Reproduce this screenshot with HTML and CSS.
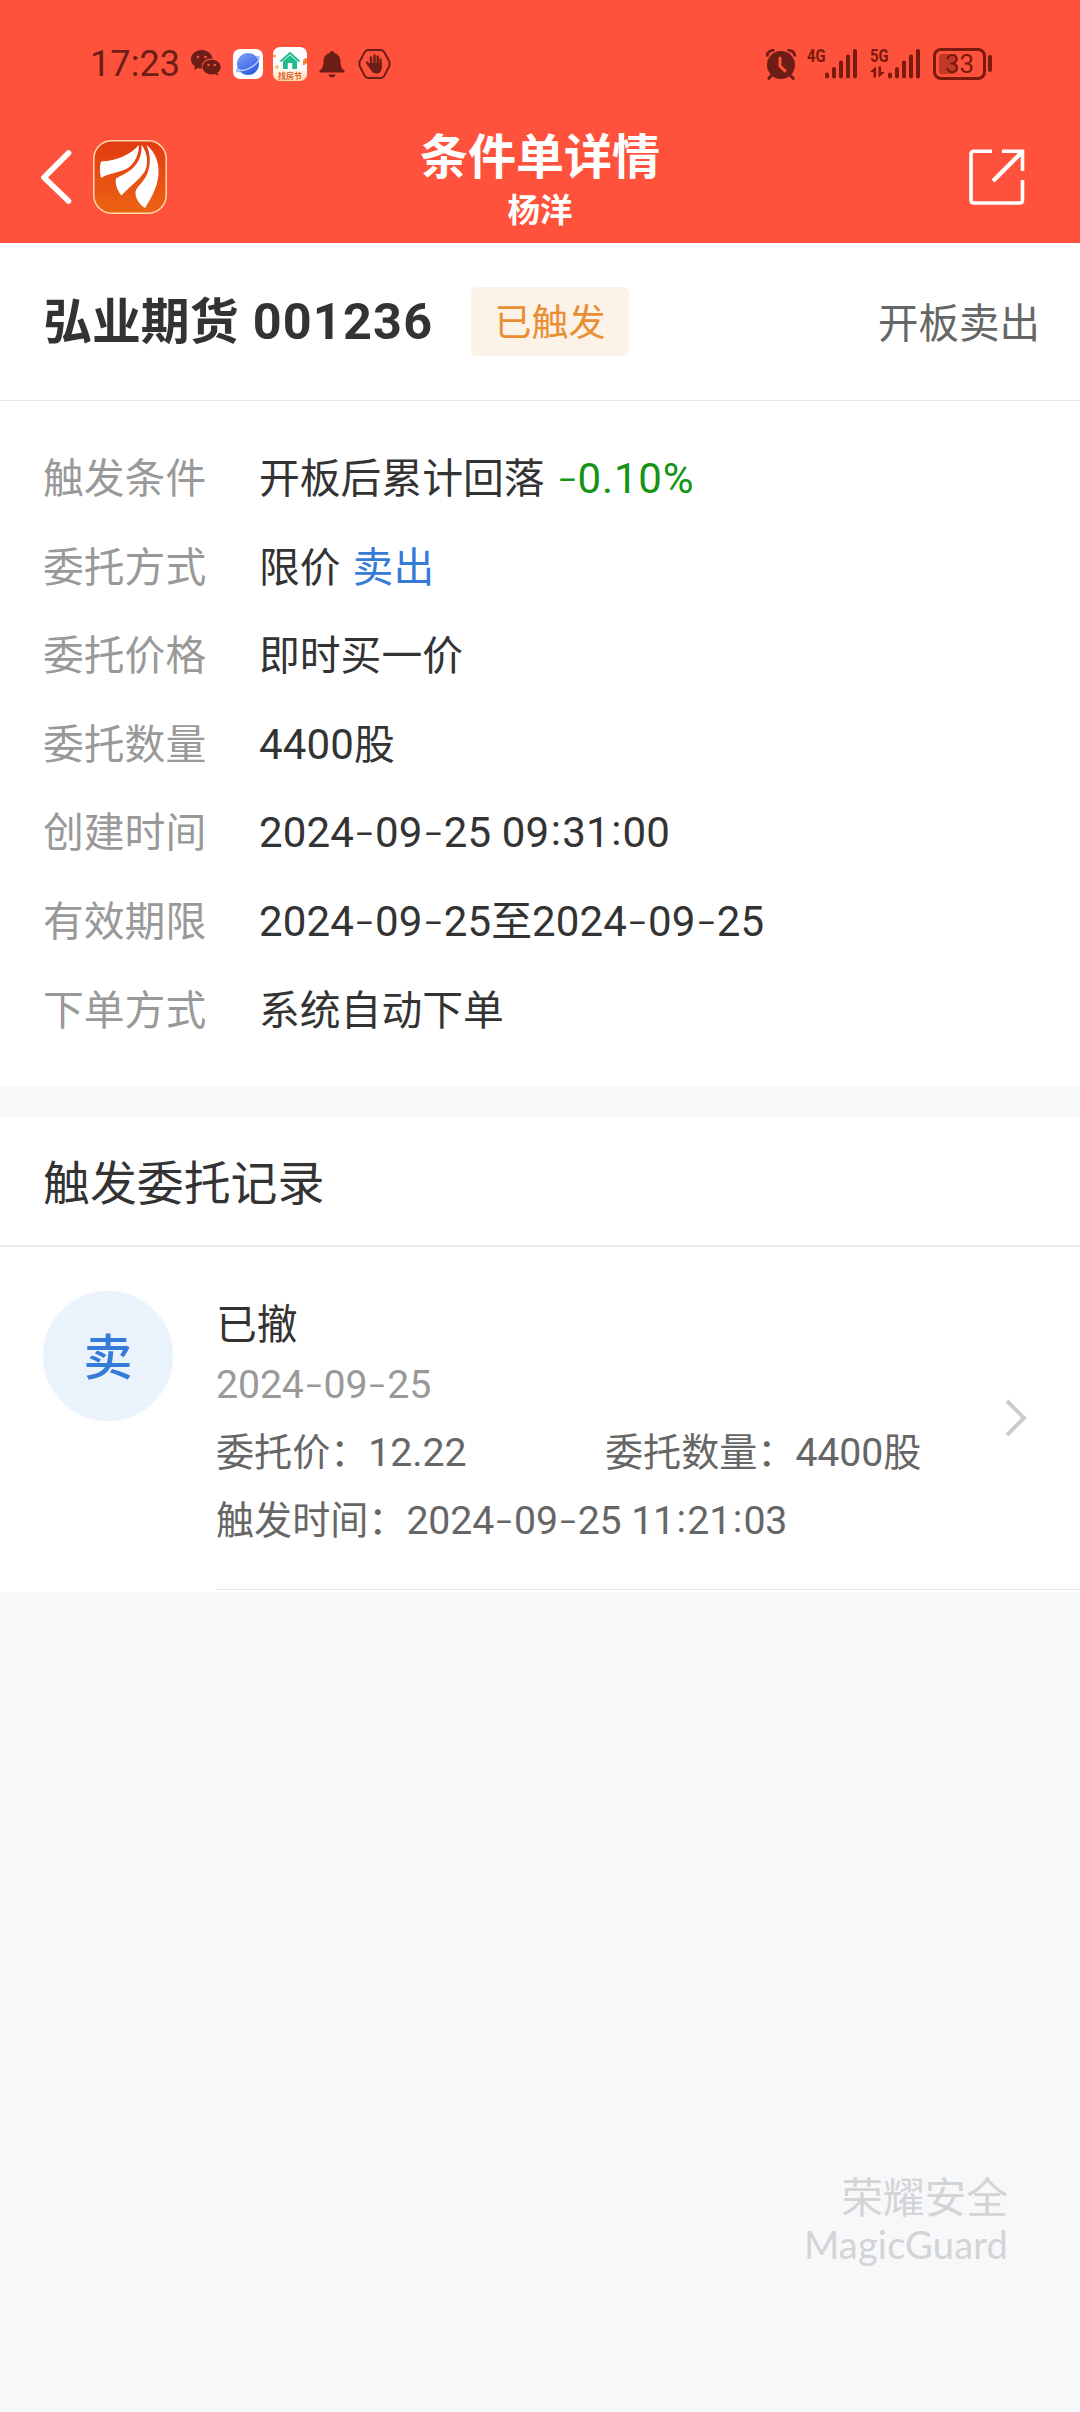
FILE: index.html
```html
<!DOCTYPE html>
<html lang="zh-CN">
<head>
<meta charset="utf-8">
<title>条件单详情</title>
<link rel="stylesheet" href="styles.css">
</head>
<body>
<header class="top">
  <div class="status">
    <span class="clock">17:23</span>
    <svg class="i-chat" width="32" height="30" viewBox="0 0 32 30"><path fill="#6b1d16" d="M12 1C5.500 1 1 5.200 1 10.200c0 3 1.500 5.600 4 7.300l-1 3.500 4-2c1.200.4 2.500.6 4 .6a9 9 0 0 1-.3-2c0-4.700 4.600-8 10-8h.9C21.600 4.500 17.300 1 12 1z"/><path fill="#6b1d16" d="M21.500 10.800c-5 0-9 3.200-9 7.300s4 7.300 9 7.300c1.200 0 2.200-.2 3.200-.5l3.600 1.900-.9-3.100c2-1.400 3.300-3.300 3.300-5.600 0-4.100-4.200-7.300-9.200-7.300z"/><g fill="#ff523c"><circle cx="8" cy="8" r="1.300"/><circle cx="15.500" cy="8" r="1.300"/><circle cx="18.500" cy="16" r="1.200"/><circle cx="24.800" cy="16" r="1.200"/></g></svg>
    <svg class="i-globe" width="30" height="30" viewBox="0 0 30 30"><defs><linearGradient id="gl" x1="0" y1="0" x2=".6" y2="1"><stop offset="0" stop-color="#83a4fb"/><stop offset="1" stop-color="#2e5ee0"/></linearGradient></defs><rect width="30" height="30" rx="7" fill="#fff"/><ellipse cx="15" cy="15" rx="14" ry="4" transform="rotate(-32 15 15)" fill="#a9c3fb"/><circle cx="15" cy="15" r="11" fill="url(#gl)"/><path d="M5 20.500C11 24 23 17 26.500 10" fill="none" stroke="#b7cbff" stroke-width="1.500"/></svg>
    <span class="i-house"><svg width="34" height="24" viewBox="0 0 34 24"><path d="M7.500 14.500L17 6l9.500 8.500" fill="none" stroke="#22bb8b" stroke-width="1.800"/><path d="M10 14.200l7-6 7 6V22h-4.800v-6h-4.400v6H10z" fill="#22bb8b"/><path d="M30 15q0-4 4-4v5q-3 3-4 2z" fill="#f08a2c"/><circle cx="1.500" cy="9" r="1.500" fill="#f5a050"/><circle cx="4" cy="20" r="2" fill="#f8c080"/></svg><b>找房节</b></span>
    <svg class="i-bell" width="26" height="28" viewBox="0 0 26 28"><path fill="#6b1d16" d="M13 1c1.300 0 2.200.8 2.300 1.900 4 1.100 6.200 4.300 6.200 8.400 0 5.700 1.500 7.400 3.700 9.200.8.700.4 1.900-.7 1.900h-23c-1.100 0-1.500-1.200-.7-1.900 2.200-1.800 3.700-3.500 3.700-9.200 0-4.100 2.200-7.300 6.200-8.400C10.800 1.800 11.700 1 13 1zM9.500 24.400h7c-.4 1.800-1.700 3-3.500 3s-3.100-1.200-3.500-3z"/></svg>
    <svg class="i-hand" width="33" height="32" viewBox="0 0 33 32"><path d="M9.500 2h14l2.500 1.600 5.500 10.200v4L26 28.400 23.500 30h-14L7 28.400 1.500 17.800v-4L7 3.600z" fill="none" stroke="#6b1d16" stroke-width="2"/><path d="M9 14.500l4.500 6M13 9.500v9M16.500 7.500v10M19.700 8.500v9M22.500 11.500v7" stroke="#6b1d16" stroke-width="2.400" stroke-linecap="round"/><path d="M11.800 15h11.900v4.500c0 4-2 6-5.500 6-3 0-4.600-1.800-6.400-5.200z" fill="#6b1d16"/></svg>
    <span class="grow"></span>
    <svg class="i-alarm" width="32" height="32" viewBox="0 0 32 32"><circle cx="16" cy="17" r="14" fill="#6b1d16"/><path d="M2 8.500a6 6 0 0 1 7.500-6M30 8.500a6 6 0 0 0-7.500-6" fill="none" stroke="#6b1d16" stroke-width="2.800"/><path d="M6.500 27.500L3.800 30.300M25.500 27.500l2.700 2.800" stroke="#6b1d16" stroke-width="3" stroke-linecap="round"/><path d="M15 10v8l5 4.800" fill="none" stroke="#ff523c" stroke-width="3" stroke-linecap="round"/></svg>
    <span class="net"><b>4G</b><svg width="34" height="31" viewBox="0 0 34 31"><path d="M3 26.500v2M10 21v7.500M17 14.500v14M24 8.500v20M31 3v25.500" stroke="#7a190e" stroke-width="4" stroke-linecap="round"/></svg></span>
    <span class="net five"><b>5G</b><svg class="arrows" width="16" height="12" viewBox="0 0 16 12"><path d="M6 .5V11.500H3.500V6H0zM8.500.5V11.500L15 6h-4V.5z" fill="#7a190e"/></svg><svg width="34" height="31" viewBox="0 0 34 31"><path d="M3 26.500v2M10 21v7.500M17 14.500v14M24 8.500v20M31 3v25.500" stroke="#7a190e" stroke-width="4" stroke-linecap="round"/></svg></span>
    <span class="battery"><span class="level"></span><b>33</b></span><span class="nub"></span>
  </div>
  <div class="nav">
    <div class="side">
      <svg class="back" width="34" height="58" viewBox="0 0 34 58"><path d="M29.500 5L5 29.500 29.500 53" fill="none" stroke="#fff" stroke-width="5.600" stroke-linecap="round" stroke-linejoin="round"/></svg>
      <svg class="logo" width="74" height="74" viewBox="0 0 74 74"><defs><linearGradient id="lg" x1="0" y1="0" x2="0" y2="1"><stop offset="0" stop-color="#e23a12"/><stop offset="1" stop-color="#ec6413"/></linearGradient></defs><rect x=".8" y=".8" width="72.400" height="72.400" rx="18" fill="url(#lg)" stroke="#ffd9a8" stroke-width="1.500"/><g fill="#fff"><path d="M8 21.500C24 20.500 37 15 46 5 46 14 42 23 35 28 26 33 16 33 8 38 6.500 32 6.500 26 8 21.500z"/><path d="M48.500 4.500C56 15 55.500 27 50 34c-6 8-14 13-21.500 21.500C24 50 22 44 23 38.500 31 34 39 31 44 23c3.500-5 5-12 4.500-18.500z"/><path d="M53.500 5C62 12 65.500 21 65.500 31 66 44 59 57 52 68 46 64 42 58 42.500 51.500c2-6 9-10 12-18.500 3.500-9 3-19-1-28z"/></g></svg>
    </div>
    <div class="titles"><h1>条件单详情</h1><p>杨洋</p></div>
    <div class="side end">
      <svg width="56" height="56" viewBox="0 0 56 56"><g fill="none" stroke="#fff" stroke-width="3.600"><path d="M23 2.300H5q-3 0-3 3V51q0 3 3 3h46q2.500 0 2.500-3V31"/><path d="M33 2.300h20.500V22" stroke-linejoin="miter"/><path d="M53 3L24 32" stroke-width="4.200"/></g></svg>
    </div>
  </div>
</header>
<main>
  <section class="card">
    <div class="stock">
      <h2>弘业期货 <span class="num">001236</span></h2>
      <span class="badge">已触发</span>
      <span class="kind">开板卖出</span>
    </div>
    <dl class="info">
      <dt>触发条件</dt><dd>开板后累计回落<span class="num green gap"><i>-</i>0.10%</span></dd>
      <dt>委托方式</dt><dd>限价<span class="blue gap2">卖出</span></dd>
      <dt>委托价格</dt><dd>即时买一价</dd>
      <dt>委托数量</dt><dd><span class="num">4400</span>股</dd>
      <dt>创建时间</dt><dd><span class="num">2024<i>-</i>09<i>-</i>25 09<u>:</u>31<u>:</u>00</span></dd>
      <dt>有效期限</dt><dd><span class="num">2024<i>-</i>09<i>-</i>25</span>至<span class="num">2024<i>-</i>09<i>-</i>25</span></dd>
      <dt>下单方式</dt><dd>系统自动下单</dd>
    </dl>
  </section>
  <section class="card records">
    <h3>触发委托记录</h3>
    <div class="record">
      <span class="avatar">卖</span>
      <div class="body">
        <p class="state">已撤</p>
        <p class="date"><span class="num">2024<i>-</i>09<i>-</i>25</span></p>
        <p class="pair"><span class="price">委托价：<span class="num">12.22</span></span><span>委托数量：<span class="num">4400</span>股</span></p>
        <p class="time">触发时间：<span class="num">2024<i>-</i>09<i>-</i>25 11<u>:</u>21<u>:</u>03</span></p>
      </div>
      <svg class="more" width="24" height="40" viewBox="0 0 24 40"><path d="M3 3l17 17L3 37" fill="none" stroke="#ccc" stroke-width="4"/></svg>
    </div>
  </section>
</main>
<footer class="guard"><p>荣耀安全</p><p class="latin">MagicGuard</p></footer>
</body>
</html>
```
FILE: styles.css
```css
* { box-sizing: border-box; margin: 0; padding: 0; }
body {
  width: 1080px; height: 2412px; overflow: hidden;
  display: flex; flex-direction: column;
  background: #f7f8fa; color: #333;
  font-family: "Noto Sans CJK SC", sans-serif; font-size: 40.8px;
}
i, u { font-style: normal; text-decoration: none; }

.top { height: 243px; background: #ff523c; color: #fff; }
.status { height: 127px; display: flex; align-items: center; padding: 0 88px 0 90px; color: #6b1d16; }
.status svg, .status span { flex: none; }
.clock { width: 100px; font: 400 36px/36px Roboto, sans-serif; letter-spacing: 0.1px; }
.i-chat { margin-right: 11px; }
.i-globe { margin-right: 10px; }
.i-house {
  width: 34px; height: 34px; border-radius: 7px; overflow: hidden; margin-right: 12px;
  display: flex; flex-direction: column; align-items: center;
  background: linear-gradient(#fff 60%, #fbd9a8);
}
.i-house b { font-size: 8px; line-height: 9px; color: #e2622a; }
.i-bell { margin-right: 13px; }
.status .grow { flex: 1; }
.i-alarm { margin-right: 10px; }
.net { display: flex; height: 31px; align-items: flex-start; margin-right: 12px; color: #7a190e; }
.net b { width: 17px; white-space: nowrap; font: 700 19px/15px Roboto, sans-serif; transform: scaleX(.78); transform-origin: 0 0; }
.net.five { position: relative; }
.arrows { position: absolute; left: 0; bottom: 1px; }
.battery {
  width: 53px; height: 32px; border: 3px solid #7a190e; border-radius: 8px;
  display: flex; align-items: center; justify-content: center; position: relative;
}
.level { position: absolute; left: 3px; top: 3px; width: 17px; height: 20px; border-radius: 3px; background: #c13a29; }
.battery b { position: relative; font: 400 26px/26px Roboto, sans-serif; color: #7a190e; }
.nub { width: 4px; height: 17px; border-radius: 2px; background: #7a190e; margin-left: 2px; }

.nav { height: 116px; display: flex; justify-content: space-between; padding: 0 55px 0 39px; }
.side { width: 240px; height: 116px; display: flex; align-items: center; padding-bottom: 16px; }
.side.end { justify-content: flex-end; }
.logo { margin-left: 20px; }
.titles { text-align: center; margin-left: 16px; }
.titles h1 { font-size: 48px; font-weight: 700; line-height: 52px; }
.titles p { font-size: 32.5px; font-weight: 700; line-height: 58px; }

.card { background: #fff; }
.num { font-family: Roboto, "Noto Sans CJK SC", sans-serif; font-size: 1.03em; letter-spacing: .15px; }
.num i { display: inline-block; font-family: Inter, sans-serif; font-weight: 300; letter-spacing: 0; padding: 0 1px; line-height: 1; transform: scaleX(1.12); }
.num u { letter-spacing: 1.2px; position: relative; top: -2px; padding-left: 1.5px; }

.stock { height: 158px; display: flex; align-items: center; padding: 0 40px 0 43px; border-bottom: 1px solid #e8e8e8; }
.stock h2 { font-size: 48.9px; font-weight: 700; line-height: 60px; white-space: nowrap; width: 428px; padding-bottom: 3px; }
.stock h2 .num { letter-spacing: 1.2px; margin-left: 3px; }
.badge { width: 158px; height: 69px; border-radius: 6px; background: #fdf2e8; color: #e88f33; font-size: 37px; line-height: 67px; text-align: center; }
.kind { margin-left: auto; color: #666; font-size: 40.5px; padding-bottom: 3px; }

.info { height: 685px; padding: 31px 43px 0; display: grid; grid-template-columns: 216px 1fr; grid-auto-rows: 88.6px; line-height: 88px; }
.info dt { color: #999; }
.info dd { white-space: nowrap; }
.info .green { color: #149414; letter-spacing: .8px; }
.blue { color: #357bd8; }
.gap { margin-left: 12px; }
.gap2 { margin-left: 12px; }

.records { margin-top: 31px; height: 475px; }
.records h3 { height: 130px; padding-left: 43px; border-bottom: 2px solid #ececec; font-size: 46.9px; font-weight: 400; line-height: 126px; }
.record { height: 345px; display: flex; padding: 44px 52px 0 43px; }
.avatar { width: 130px; height: 130px; border-radius: 50%; background: #eaf2fc; color: #357bd8; font-size: 49px; font-weight: 500; line-height: 126px; text-align: center; }
.body { flex: 1; height: 299px; margin-left: 43px; margin-right: -76px; border-bottom: 1px solid #e8e8e8; font-size: 38.1px; color: #666; white-space: nowrap; }
.body .num { letter-spacing: -.1px; }
.body .num i { letter-spacing: 0; }
.state { font-size: 40.8px; line-height: 62px; color: #333; }
.date { line-height: 58px; color: #999; }
.pair { display: flex; line-height: 66px; margin-top: 3px; }
.price { width: 389px; }
.time { line-height: 66px; margin-top: -1px; }
.more { margin-top: 107px; }

.guard { margin-top: auto; height: 248px; padding-right: 72px; text-align: right; color: #d3d4d6; font-size: 41.7px; line-height: 62px; }
.guard .latin { font-family: Lato, sans-serif; font-size: 38px; line-height: 36px; letter-spacing: .2px; }
```
